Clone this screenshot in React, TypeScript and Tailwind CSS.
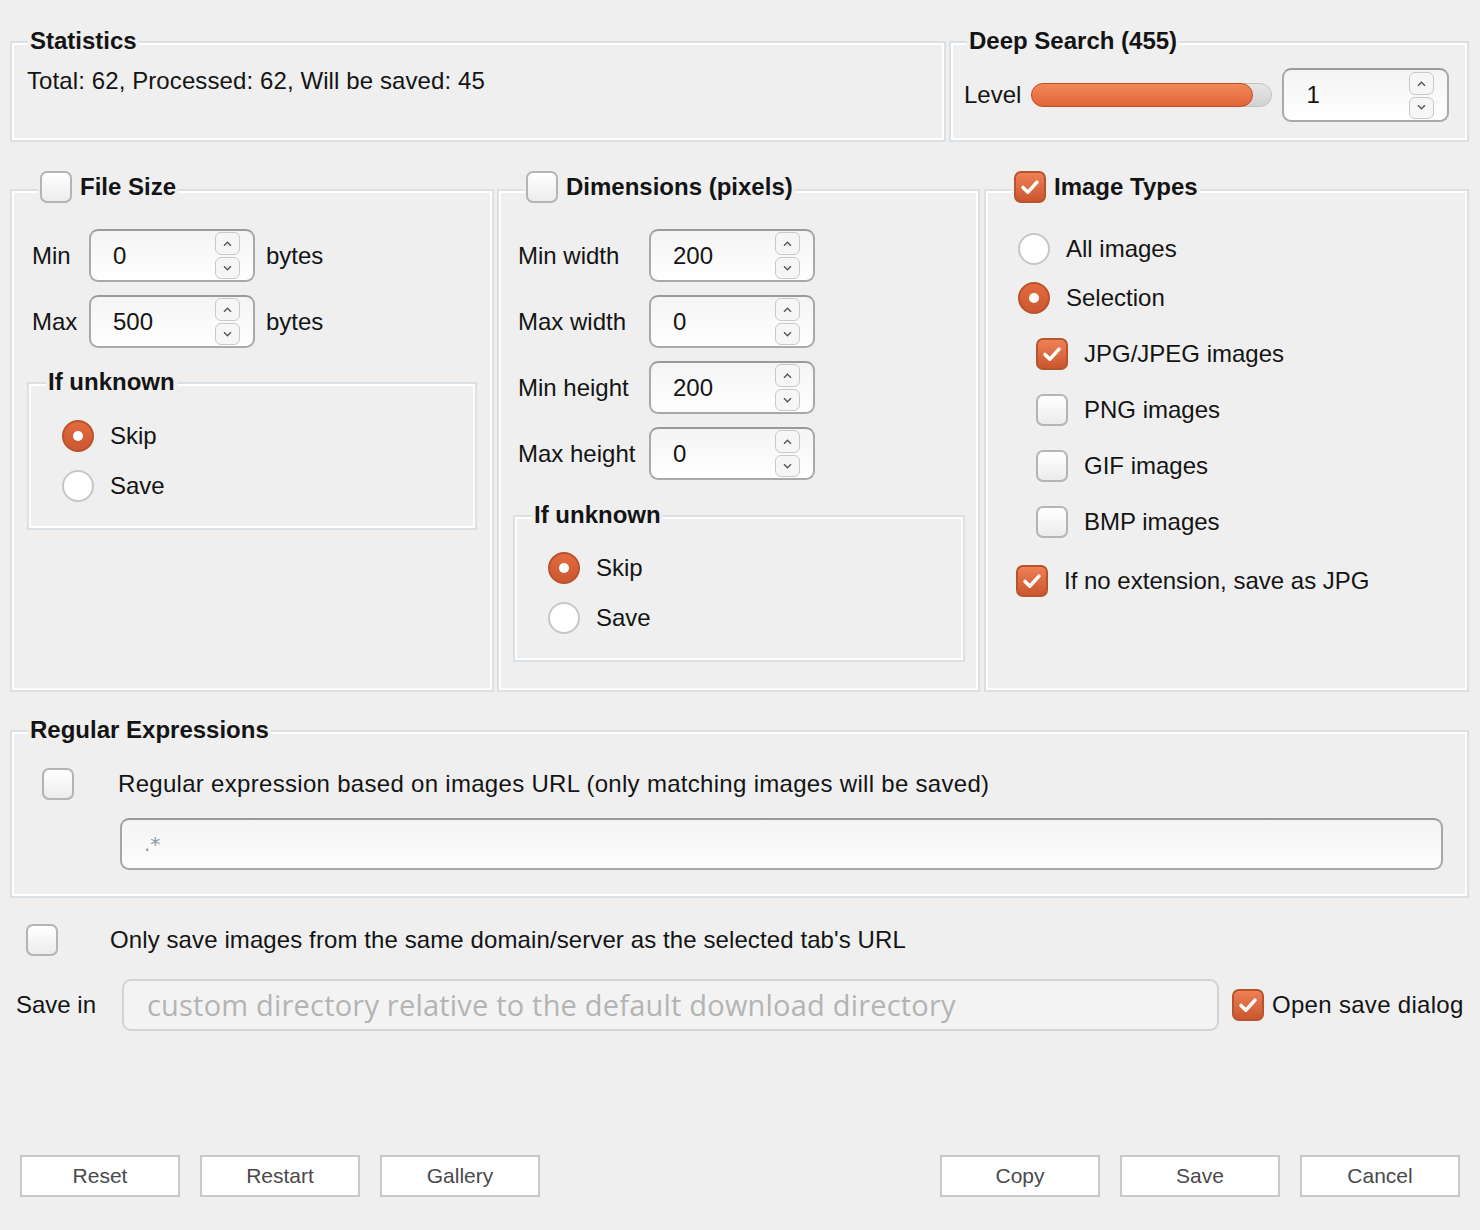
import type { ReactNode } from "react";

function Tick() {
  return (
    <svg viewBox="0 0 32 32" className="w-full h-full">
      <path d="M8 16.5l5.5 5.5L24 10.5" fill="none" stroke="white" strokeWidth="4" strokeLinecap="round" strokeLinejoin="round" />
    </svg>
  );
}

function Checkbox({ checked = false }: { checked?: boolean }) {
  if (checked) {
    return (
      <span className="w-8 h-8 shrink-0 rounded-[7px] border-2 border-[#b8542c] bg-linear-to-b from-[#ee8056] to-[#cb5630] flex items-center justify-center">
        <Tick />
      </span>
    );
  }
  return <span className="w-8 h-8 shrink-0 rounded-[7px] border-2 border-[#b4b4b4] bg-linear-to-b from-white to-[#ececec]" />;
}

function Radio({ checked = false }: { checked?: boolean }) {
  if (checked) {
    return (
      <span className="w-8 h-8 shrink-0 rounded-full border-2 border-[#b9532b] bg-linear-to-b from-[#e36a3e] to-[#cb5832] flex items-center justify-center">
        <span className="w-[10px] h-[10px] rounded-full bg-white" />
      </span>
    );
  }
  return <span className="w-8 h-8 shrink-0 rounded-full border-2 border-[#c6c6c6] bg-white" />;
}

function Chevron({ up }: { up?: boolean }) {
  return (
    <svg viewBox="0 0 12 8" className="w-[11px] h-[7px]">
      <path d={up ? "M2 6.5L6 2.5L10 6.5" : "M2 1.5L6 5.5L10 1.5"} fill="none" stroke="#555" strokeWidth="1.6" />
    </svg>
  );
}

function Spin({ value, className = "w-[166px] h-[53px]" }: { value: string; className?: string }) {
  return (
    <div className={`relative shrink-0 rounded-[9px] border-2 border-[#a9a9a9] border-t-[#9a9a9a] bg-linear-to-b from-[#f4f4f4] to-white flex items-center pl-[22px] ${className}`}>
      <span>{value}</span>
      <span className="absolute right-[13px] top-0 bottom-0 flex flex-col justify-center gap-[2px]">
        <span className="w-[25px] h-[23px] rounded-[6px] border border-[#c9c9c9] bg-[#f6f6f6] flex items-center justify-center">
          <Chevron up />
        </span>
        <span className="w-[25px] h-[22px] rounded-[6px] border border-[#c9c9c9] bg-[#f6f6f6] flex items-center justify-center">
          <Chevron />
        </span>
      </span>
    </div>
  );
}

function Group({
  legend,
  className = "",
  children,
  legendPos = "left-[16px] top-[-2px]",
}: {
  legend: ReactNode;
  className?: string;
  children?: ReactNode;
  legendPos?: string;
}) {
  return (
    <div className={`relative shrink-0 border-2 border-[#dae0e3] shadow-[inset_0_0_0_2px_#ffffff] ${className}`}>
      <div className={`absolute -translate-y-1/2 ${legendPos} px-[2px] bg-[#efefef] font-bold flex items-center gap-[8px] whitespace-nowrap`}>
        {legend}
      </div>
      {children}
    </div>
  );
}

function Row({ label, value, labelW }: { label: string; value: string; labelW: string }) {
  return (
    <div className="flex items-center pl-[5px]">
      <span className={labelW}>{label}</span>
      <Spin value={value} />
    </div>
  );
}

function Opt({ children, gap = "gap-[16px]" }: { children: ReactNode; gap?: string }) {
  return <div className={`flex items-center ${gap}`}>{children}</div>;
}

function Btn({ label }: { label: string }) {
  return (
    <button className="w-[160px] h-[42px] border-2 border-[#c9c9c9] bg-white text-[21px] text-[#4a4a4a] flex items-center justify-center">
      {label}
    </button>
  );
}

export default function App() {
  return (
    <div className="w-[1480px] h-[1230px] bg-[#efefef] font-['Liberation_Sans',Arial,sans-serif] text-[24px] leading-[28px] text-[#141414] flex flex-col pl-[10px] pr-[11px]">
      {/* top row */}
      <div className="mt-[41px] flex gap-[3px]">
        <Group legend="Statistics" className="w-[936px] h-[101px] pl-[15px] pt-[24px]">
          <div className="tracking-[0.1px]">Total: 62, Processed: 62, Will be saved: 45</div>
        </Group>
        <Group legend="Deep Search (455)" className="flex-1 h-[101px] pl-[13px] pt-[25px]">
          <div className="flex items-center">
            <span>Level</span>
            <div className="ml-[10px] relative w-[241px] h-[24px] rounded-full bg-linear-to-b from-[#e6e6e6] to-[#d2d2d2] border border-[#c2c2c2]">
              <div className="absolute left-[-1px] top-[-1px] w-[222px] h-[24px] rounded-full border border-[#c24f28] bg-linear-to-b from-[#f28859] to-[#e0643a]" />
            </div>
            <Spin value="1" className="ml-[10px] w-[167px] h-[54px]" />
          </div>
        </Group>
      </div>

      {/* filters */}
      <div className="mt-[47px] flex h-[503px]">
        <Group
          className="w-[484px] h-full px-[15px] pt-[38px]"
          legendPos="left-[26px] top-[-4px]"
          legend={
            <>
              <Checkbox />
              <span>File Size</span>
            </>
          }
        >
          <div className="flex flex-col gap-[13px]">
            <div className="flex items-center pl-[5px]">
              <span className="w-[57px]">Min</span>
              <Spin value="0" />
              <span className="ml-[11px]">bytes</span>
            </div>
            <div className="flex items-center pl-[5px]">
              <span className="w-[57px]">Max</span>
              <Spin value="500" />
              <span className="ml-[11px]">bytes</span>
            </div>
          </div>
          <Group legend="If unknown" legendPos="left-[17px] top-[-2px]" className="mt-[34px] w-[450px] h-[148px] pl-[33px] pt-[36px]">
            <div className="flex flex-col gap-[18px]">
              <Opt>
                <Radio checked />
                <span>Skip</span>
              </Opt>
              <Opt>
                <Radio />
                <span>Save</span>
              </Opt>
            </div>
          </Group>
        </Group>

        <Group
          className="ml-[3px] w-[483px] h-full px-[14px] pt-[38px]"
          legendPos="left-[25px] top-[-4px]"
          legend={
            <>
              <Checkbox />
              <span>Dimensions (pixels)</span>
            </>
          }
        >
          <div className="flex flex-col gap-[13px]">
            <Row label="Min width" value="200" labelW="w-[131px]" />
            <Row label="Max width" value="0" labelW="w-[131px]" />
            <Row label="Min height" value="200" labelW="w-[131px]" />
            <Row label="Max height" value="0" labelW="w-[131px]" />
          </div>
          <Group legend="If unknown" legendPos="left-[17px] top-[-2px]" className="mt-[35px] w-[452px] h-[147px] pl-[33px] pt-[35px]">
            <div className="flex flex-col gap-[18px]">
              <Opt>
                <Radio checked />
                <span>Skip</span>
              </Opt>
              <Opt>
                <Radio />
                <span>Save</span>
              </Opt>
            </div>
          </Group>
        </Group>

        <Group
          className="ml-[4px] flex-1 h-full pl-[32px] pt-[42px]"
          legendPos="left-[26px] top-[-4px]"
          legend={
            <>
              <Checkbox checked />
              <span>Image Types</span>
            </>
          }
        >
          <div className="flex flex-col gap-[17px]">
            <Opt>
              <Radio />
              <span>All images</span>
            </Opt>
            <Opt>
              <Radio checked />
              <span>Selection</span>
            </Opt>
          </div>
          <div className="mt-[24px] ml-[18px] flex flex-col gap-[24px]">
            <Opt>
              <Checkbox checked />
              <span>JPG/JPEG images</span>
            </Opt>
            <Opt>
              <Checkbox />
              <span>PNG images</span>
            </Opt>
            <Opt>
              <Checkbox />
              <span>GIF images</span>
            </Opt>
            <Opt>
              <Checkbox />
              <span>BMP images</span>
            </Opt>
          </div>
          <div className="mt-[27px] ml-[-2px]">
            <Opt>
              <Checkbox checked />
              <span>If no extension, save as JPG</span>
            </Opt>
          </div>
        </Group>
      </div>

      {/* regular expressions */}
      <Group legend="Regular Expressions" className="mt-[38px] h-[168px] pl-[30px] pr-[24px] pt-[36px]">
        <Opt gap="gap-[44px]">
          <Checkbox />
          <span className="tracking-[0.3px]">Regular expression based on images URL (only matching images will be saved)</span>
        </Opt>
        <div className="mt-[18px] ml-[78px] h-[52px] rounded-[9px] border-2 border-[#a6a6a6] border-t-[#999999] bg-linear-to-b from-[#f4f4f4] to-[#fdfdfd] flex items-center pl-[22px] text-[#8a98a8] font-['DejaVu_Sans',sans-serif] text-[20px]">
          .*
        </div>
      </Group>

      {/* same domain */}
      <div className="mt-[26px] ml-[16px]">
        <Opt gap="gap-[52px]">
          <Checkbox />
          <span className="tracking-[0.1px]">Only save images from the same domain/server as the selected tab's URL</span>
        </Opt>
      </div>

      {/* save in */}
      <div className="mt-[23px] flex items-center">
        <span className="ml-[6px] w-[106px]">Save in</span>
        <div className="w-[1097px] h-[52px] rounded-[9px] border-2 border-[#d3d3d3] bg-[#f3f3f3] flex items-center pl-[23px] text-[#b4b4b4] font-['Open_Sans',sans-serif] text-[29px] tracking-[0.2px] whitespace-nowrap overflow-hidden">
          custom directory relative to the default download directory
        </div>
        <div className="ml-[13px] flex items-center gap-[8px] whitespace-nowrap">
          <Checkbox checked />
          <span className="tracking-[0.3px]">Open save dialog</span>
        </div>
      </div>

      {/* buttons */}
      <div className="mt-[124px] ml-[10px] mr-[9px] flex items-center">
        <div className="flex gap-[20px]">
          <Btn label="Reset" />
          <Btn label="Restart" />
          <Btn label="Gallery" />
        </div>
        <div className="ml-auto flex gap-[20px]">
          <Btn label="Copy" />
          <Btn label="Save" />
          <Btn label="Cancel" />
        </div>
      </div>
    </div>
  );
}
